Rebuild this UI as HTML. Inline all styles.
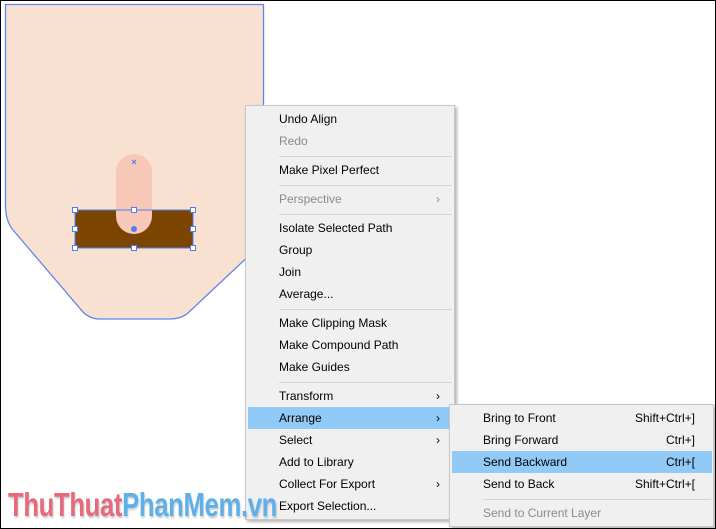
<!DOCTYPE html>
<html><head><style>
body{margin:0;width:716px;height:529px;overflow:hidden;background:#fff;position:relative;font-family:"Segoe UI","Liberation Sans",sans-serif;}
.frame{position:absolute;left:0;top:0;width:714px;height:527px;border:1px solid #000;}
.menu{position:absolute;background:#f0f0f0;border:1px solid #c8c8c8;box-shadow:2px 2px 3px rgba(0,0,0,.3);}
.it{position:absolute;left:0;right:0;height:22px;line-height:22px;font-size:12px;color:#000;}
.it span{position:absolute;}
.dis{color:#8a8a8a;}
.sep{position:absolute;height:1px;background:#d5d5d5;}
.hl{background:#91c9f7;}
.arr{position:absolute;font-size:12px;color:#444;}
.wm{position:absolute;left:8px;top:486px;font:bold 33px "Liberation Sans",sans-serif;transform:scaleX(.78);transform-origin:0 0;text-shadow:1px 2px 2px rgba(0,0,0,.2);white-space:nowrap;letter-spacing:-0.5px}
</style></head><body>
<div class="frame"></div>
<svg style="position:absolute;left:0;top:0" width="716" height="529">
<path d="M5.5 4.5 H263.5 V242 L188 313 Q181 319 170 319 H100 Q90 319 83 312 L13 230 Q5.5 221 5.5 205 Z" fill="#f9e1d1" stroke="#5f86ee" stroke-width="1.3"/>
<rect x="116" y="154" width="36" height="80" rx="18" fill="#f7c8b7"/>
<rect x="75" y="210" width="118" height="38" fill="#7b4400"/>
<path d="M116 210 V216 A18 18 0 0 0 152 216 V210Z" fill="#f7c8b7"/>
<rect x="75" y="210" width="118" height="38" fill="none" stroke="#4f7ef0" stroke-width="1"/>
<g fill="#fff" stroke="#4f7ef0">
<rect x="72.5" y="207.5" width="5" height="5"/><rect x="131.5" y="207.5" width="5" height="5"/><rect x="190.5" y="207.5" width="5" height="5"/>
<rect x="72.5" y="226.5" width="5" height="5"/><rect x="190.5" y="226.5" width="5" height="5"/>
<rect x="72.5" y="245.5" width="5" height="5"/><rect x="131.5" y="245.5" width="5" height="5"/><rect x="190.5" y="245.5" width="5" height="5"/>
</g>
<circle cx="134" cy="229" r="3" fill="#4f7ef0"/>
<path d="M132 160l4 4M136 160l-4 4" stroke="#4f7ef0" stroke-width="1"/>
</svg>
<div class="menu" style="left:245px;top:105px;width:208px;height:413px;">
<div class="it" style="top:2px"><span style="left:33px">Undo Align</span></div>
<div class="it dis" style="top:24px"><span style="left:33px">Redo</span></div>
<div class="sep" style="left:33px;right:2px;top:50px"></div>
<div class="it" style="top:53px"><span style="left:33px">Make Pixel Perfect</span></div>
<div class="sep" style="left:33px;right:2px;top:79px"></div>
<div class="it dis" style="top:82px"><span style="left:33px">Perspective</span><span style="left:190px">›</span></div>
<div class="sep" style="left:33px;right:2px;top:108px"></div>
<div class="it" style="top:111px"><span style="left:33px">Isolate Selected Path</span></div>
<div class="it" style="top:133px"><span style="left:33px">Group</span></div>
<div class="it" style="top:155px"><span style="left:33px">Join</span></div>
<div class="it" style="top:177px"><span style="left:33px">Average...</span></div>
<div class="sep" style="left:33px;right:2px;top:203px"></div>
<div class="it" style="top:206px"><span style="left:33px">Make Clipping Mask</span></div>
<div class="it" style="top:228px"><span style="left:33px">Make Compound Path</span></div>
<div class="it" style="top:250px"><span style="left:33px">Make Guides</span></div>
<div class="sep" style="left:33px;right:2px;top:276px"></div>
<div class="it" style="top:279px"><span style="left:33px">Transform</span><span style="left:190px">›</span></div>
<div class="it hl" style="top:301px;left:2px;right:4px"><span style="left:31px">Arrange</span><span style="left:188px">›</span></div>
<div class="it" style="top:323px"><span style="left:33px">Select</span><span style="left:190px">›</span></div>
<div class="it" style="top:345px"><span style="left:33px">Add to Library</span></div>
<div class="it" style="top:367px"><span style="left:33px">Collect For Export</span><span style="left:190px">›</span></div>
<div class="it" style="top:389px"><span style="left:33px">Export Selection...</span></div>
</div>
<div class="menu" style="left:449px;top:404px;width:263px;height:121px;">
<div class="it" style="top:2px"><span style="left:33px">Bring to Front</span><span style="right:18px">Shift+Ctrl+]</span></div>
<div class="it" style="top:24px"><span style="left:33px">Bring Forward</span><span style="right:18px">Ctrl+]</span></div>
<div class="it hl" style="top:46px;left:2px;right:1px"><span style="left:31px">Send Backward</span><span style="right:17px">Ctrl+[</span></div>
<div class="it" style="top:68px"><span style="left:33px">Send to Back</span><span style="right:18px">Shift+Ctrl+[</span></div>
<div class="sep" style="left:33px;right:2px;top:94px"></div>
<div class="it dis" style="top:97px"><span style="left:33px">Send to Current Layer</span></div>
</div>
<div class="wm"><span style="color:#e46a7c">ThuThuat</span><span style="color:#5fb0e8">PhanMem.vn</span></div>
</body></html>
